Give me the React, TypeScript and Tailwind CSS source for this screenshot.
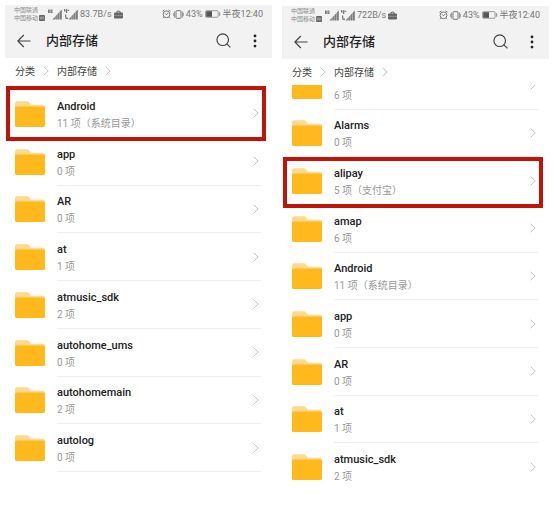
type Entry = {
  name: string;
  info: string;
  mark?: string;
};

const leftEntries: Entry[] = [
  { name: "Android", info: "11 项（系统目录）", mark: "-top-1 -bottom-[3px]" },
  { name: "app", info: "0 项" },
  { name: "AR", info: "0 项" },
  { name: "at", info: "1 项" },
  { name: "atmusic_sdk", info: "2 项" },
  { name: "autohome_ums", info: "0 项" },
  { name: "autohomemain", info: "2 项" },
  { name: "autolog", info: "0 项" },
];

const rightEntries: Entry[] = [
  { name: "", info: "6 项" },
  { name: "Alarms", info: "0 项" },
  { name: "alipay", info: "5 项（支付宝）", mark: "top-0 -bottom-[3px]" },
  { name: "amap", info: "6 项" },
  { name: "Android", info: "11 项（系统目录）" },
  { name: "app", info: "0 项" },
  { name: "AR", info: "0 项" },
  { name: "at", info: "1 项" },
  { name: "atmusic_sdk", info: "2 项" },
];

function Chevron({ className }: { className: string }) {
  return (
    <svg viewBox="0 0 6 10" fill="none" stroke="#c4c4c4" className={className}>
      <path d="M0.7 0.7 5.2 5 0.7 9.3" />
    </svg>
  );
}

function Folder() {
  return (
    <svg viewBox="0 0 30 26" className="h-[26px] w-[30px] shrink-0">
      <path d="M0 2.2Q0 .3 2 .3h10q1.3 0 2 1l1.6 2.4H28q2 0 2 2V12H0z" fill="#ffd98c" />
      <rect y="5.4" width="30" height="20.6" rx="1.6" fill="#ffb91d" />
    </svg>
  );
}

function Signal({ tag }: { tag: string }) {
  return (
    <svg viewBox="0 0 14 11" className="h-[11px] w-[14px]" fill="#7c7c7c">
      {tag === "3g" ? (
        <path d="M0 .5h1.8V4H0zM2.4.5h2.2v1.2H3.5v.6h1.1V4H2.4z" />
      ) : (
        <path d="M0 0h1.3v1.4h.8V0h1.2v4H2V2.4H0zM3.7.8h1.5v1.2H3.7zM1 5.6h1.3v3H1zM1.5 8.6H4v1.5H1.5z" />
      )}
      <path d="M13.8 .5v10H4.4z" />
      <path d="M7.2 7v4M9.3 5v6M11.5 3v8" stroke="#f2f2f2" strokeWidth=".4" />
    </svg>
  );
}

function StatusBar({ speed }: { speed: string }) {
  return (
    <div className="flex h-[18px] items-center pr-[9px] pl-[9px] text-[9px] leading-none whitespace-nowrap text-[#777]">
      <div className="text-[6px] leading-[8px] text-[#8c8c8c]">
        <div>中国联通</div>
        <div className="flex items-center gap-px">
          中国移动
          <svg viewBox="0 0 6 6" className="size-[6px]">
            <rect width="6" height="6" rx="1" fill="#666" />
            <path d="M1.3 1.5v3M2.7 1.5v3M1.3 3h1.4M3.7 1.8v2.4h.5q.8 0 .8-1.2t-.8-1.2z" stroke="#ddd" strokeWidth=".4" fill="none" />
          </svg>
        </div>
      </div>
      <div className="ml-[3px] flex items-center gap-[2px]">
        <Signal tag="3g" />
        <Signal tag="4g" />
        <span>{speed}</span>
        <svg viewBox="0 0 9 9" className="size-[9px]" fill="#666">
          <path d="M2.2 2.4Q2.3.4 4.5.4t2.3 2H8q1 0 1 1v4q0 1-1 1H1q-1 0-1-1v-4q0-1 1-1zM3.3 2.4h2.4q0-.9-1.2-.9t-1.2.9z" />
          <path d="M0 5.4h9" stroke="#aaa" strokeWidth=".6" />
        </svg>
      </div>
      <div className="ml-auto flex items-center gap-[2px]">
        <svg viewBox="0 0 9 10" className="h-[10px] w-[9px]" fill="none" stroke="#777" strokeWidth="1">
          <circle cx="4.5" cy="5.3" r="3.4" />
          <path d="M.5 2.3 2.4.9M8.5 2.3 6.6.9M3 4.3l1.5 1.5L6.2 4M1.8 8.2 1 9.2M7.2 8.2l.8 1" />
        </svg>
        <svg viewBox="0 0 11 9" className="h-[9px] w-[11px]" fill="none" stroke="#777">
          <rect x="3" y=".7" width="5" height="7.6" rx=".6" />
          <path d="M1.4 1.5v6M9.6 1.5v6M.2 3v3M10.8 3v3" strokeWidth=".8" />
        </svg>
        <span>43%</span>
        <svg viewBox="0 0 16 8" className="h-[8px] w-[16px]">
          <rect x=".5" y=".7" width="12.6" height="6.6" rx="1" fill="none" stroke="#888" strokeWidth=".8" />
          <rect x="1.2" y="1.2" width="5.8" height="5.6" fill="#555" />
          <path d="M14.7 2.2v3.6" stroke="#888" />
        </svg>
        <span>半夜12:40</span>
      </div>
    </div>
  );
}

function Header({ speed }: { speed: string }) {
  return (
    <header className="bg-[#f2f2f2]">
      <StatusBar speed={speed} />
      <div className="flex h-[35px] items-center pr-[15px] pl-3">
        <button type="button" aria-label="返回">
          <svg viewBox="0 0 14 14" className="size-[14px]" fill="none" stroke="#444" strokeWidth="1.2">
            <path d="M13.5 7H1M6.8 1 .9 7l5.9 6" />
          </svg>
        </button>
        <h1 className="ml-[15px] text-[13px] font-medium text-[#222]">内部存储</h1>
        <button type="button" aria-label="搜索" className="ml-auto">
          <svg viewBox="0 0 15 15" className="size-[15px]" fill="none" stroke="#444" strokeWidth="1.2">
            <circle cx="6.7" cy="6.7" r="5.8" />
            <path d="m10.9 10.9 3.5 3.5" />
          </svg>
        </button>
        <button type="button" aria-label="更多" className="ml-[22px]">
          <svg viewBox="0 0 4 14" className="h-[14px] w-[4px]" fill="#222">
            <circle cx="2" cy="1.9" r="1.4" />
            <circle cx="2" cy="7" r="1.4" />
            <circle cx="2" cy="12.1" r="1.4" />
          </svg>
        </button>
      </div>
    </header>
  );
}

function Breadcrumb() {
  return (
    <nav className="flex h-[26px] items-center pl-[10px] text-[10px] text-[#444]">
      <a href="#root">分类</a>
      <Chevron className="mx-2 h-[10px] w-[6px]" />
      <a href="#storage">内部存储</a>
      <Chevron className="ml-2 h-[10px] w-[6px]" />
    </nav>
  );
}

function Row({ entry, last }: { entry: Entry; last?: boolean }) {
  return (
    <li className="relative flex pr-[11px] pl-[10px]">
      <div className="flex items-center">
        <Folder />
      </div>
      <div className={`ml-3 flex flex-1 items-center border-b pr-[2px] ${last ? "border-transparent" : "border-[#eee]"}`}>
        <div className="flex-1 pt-[3px]">
          <div className="h-[17px] text-[11px] leading-[17px] font-medium text-[#222]">{entry.name}</div>
          <div className="text-[10px] leading-[17px] text-[#999]">{entry.info}</div>
        </div>
        <Chevron className="h-[10px] w-[6px]" />
      </div>
      {entry.mark && <div className={`absolute right-[6px] left-px border-4 border-[#bf1508] ${entry.mark}`} />}
    </li>
  );
}

export default function App() {
  return (
    <main className="grid grid-cols-2 gap-[10px] bg-white px-[5px] font-['Roboto','Noto_Sans_CJK_SC',sans-serif]">
      <section className="pt-[5px]">
        <Header speed="83.7B/s" />
        <Breadcrumb />
        <ul className="mt-[6px] grid min-h-[382px] auto-rows-fr">
          {leftEntries.map((e) => (
            <Row key={e.name} entry={e} />
          ))}
        </ul>
      </section>
      <section className="pt-[6px]">
        <Header speed="722B/s" />
        <Breadcrumb />
        {/* list is scrolled by half a row */}
        <div className="overflow-hidden">
          <ul className="-mt-[23px] grid min-h-[429px] auto-rows-fr">
            {rightEntries.map((e, i) => (
              <Row key={e.name} entry={e} last={i === rightEntries.length - 1} />
            ))}
          </ul>
        </div>
      </section>
    </main>
  );
}
